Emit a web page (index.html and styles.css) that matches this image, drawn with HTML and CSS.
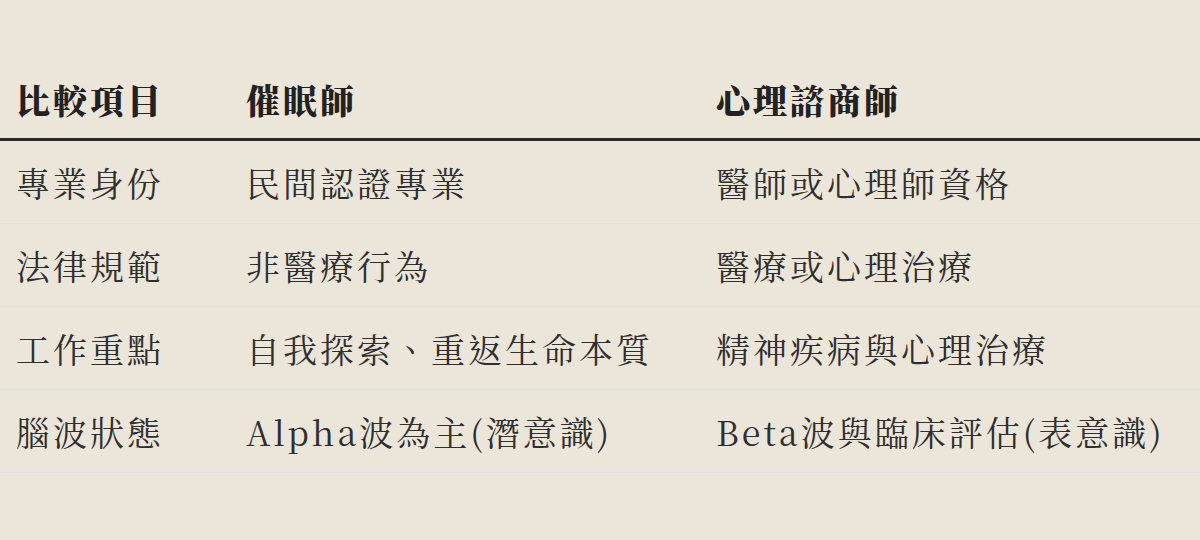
FILE: index.html
```html
<!DOCTYPE html>
<html lang="zh-Hant">
<head>
<meta charset="utf-8">
<link rel="stylesheet" href="styles.css">
</head>
<body>
<table class="compare">
  <thead>
    <tr>
      <th class="c1">比較項目</th>
      <th class="c2">催眠師</th>
      <th class="c3">心理諮商師</th>
    </tr>
  </thead>
  <tbody>
    <tr><td>專業身份</td><td>民間認證專業</td><td>醫師或心理師資格</td></tr>
    <tr><td>法律規範</td><td>非醫療行為</td><td>醫療或心理治療</td></tr>
    <tr><td>工作重點</td><td>自我探索、重返生命本質</td><td>精神疾病與心理治療</td></tr>
    <tr><td>腦波狀態</td><td>Alpha波為主(潛意識)</td><td>Beta波與臨床評估(表意識)</td></tr>
  </tbody>
</table>
</body>
</html>
```
FILE: styles.css
```css
html, body {
  margin: 0;
  padding: 0;
  background: #ece5da;
}
body {
  font-family: "Noto Serif CJK TC", "Liberation Serif", "Noto Sans CJK TC", serif;
  color: #2f2f2f;
}
.compare {
  width: 100%;
  margin-top: 60px;
  border-collapse: collapse;
  table-layout: fixed;
}
.compare th, .compare td {
  text-align: left;
  vertical-align: middle;
  padding: 0 0 0 16px;
  font-size: 34px;
  letter-spacing: 3px;
  white-space: nowrap;
}
.compare th {
  height: 78px;
  font-weight: 900;
  color: #222;
  border-bottom: 3px solid #2a2a2a;
}
.compare td {
  height: 82px;
  font-weight: 400;
  border-bottom: 1px solid #dde1e2;
}
.c1 { width: 214px; }
.c2 { width: 454px; }
```
